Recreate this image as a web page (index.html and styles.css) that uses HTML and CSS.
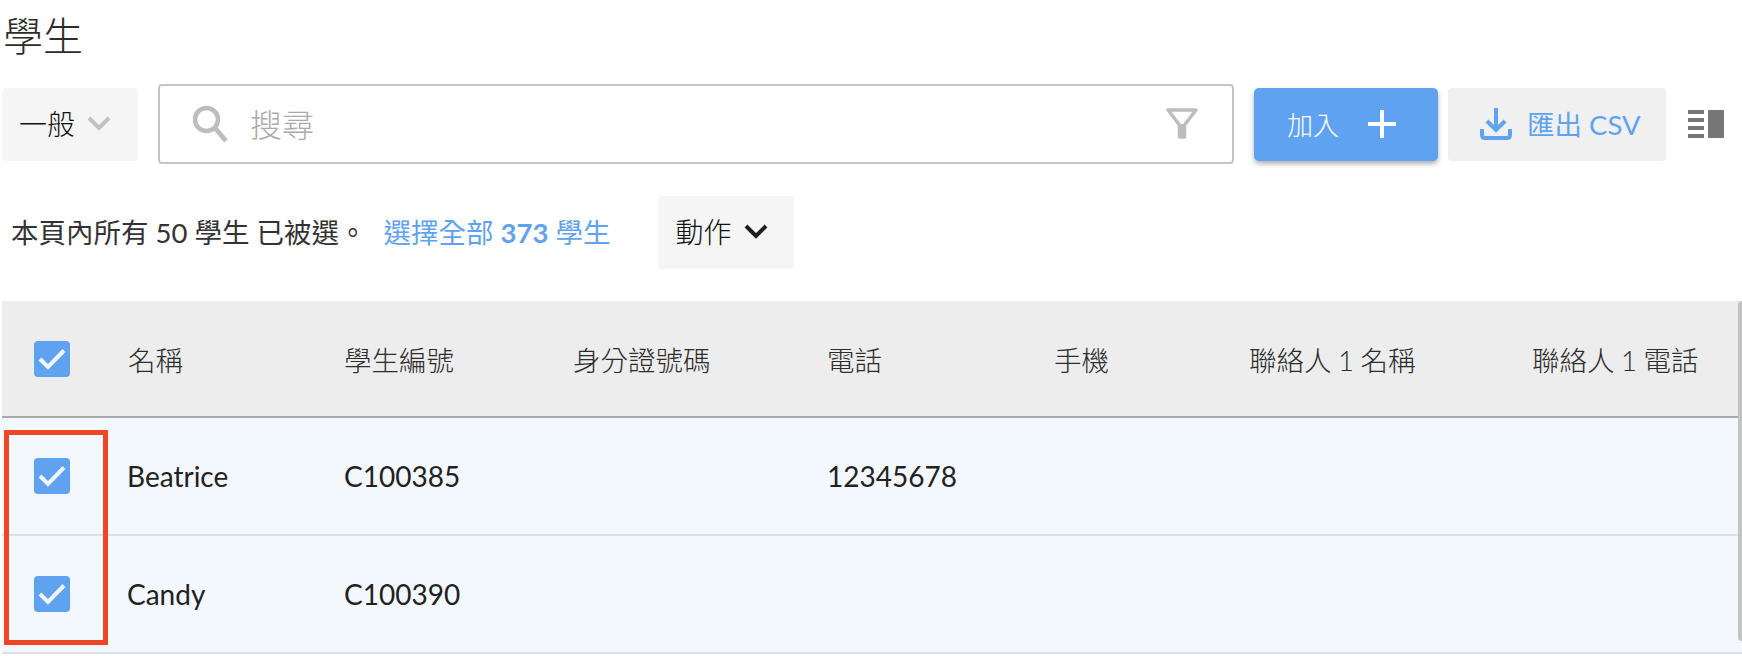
FILE: index.html
```html
<!DOCTYPE html>
<html lang="zh-Hant">
<head>
<meta charset="utf-8">
<title>學生</title>
<link rel="stylesheet" href="styles.css">
</head>
<body>
<main class="page">
  <h1 class="title">學生</h1>
  <div class="toolbar">
    <button class="scope">一般
      <svg class="scope-chev" viewBox="0 0 24 16"><path d="M2 3l10 10L22 3" fill="none" stroke="#c2c2c2" stroke-width="4"/></svg>
    </button>
    <div class="search">
      <svg class="search-icon" viewBox="0 0 36 38"><circle cx="14.5" cy="14.500" r="11.500" fill="none" stroke="#bdbdbd" stroke-width="4.500"/><path d="M23 23l11 13" stroke="#bdbdbd" stroke-width="5" fill="none"/></svg>
      <span class="search-text">搜尋</span>
      <svg class="filter-icon" viewBox="0 0 32 32"><path d="M2 2h28L18.500 17v12h-5V17z" fill="none" stroke="#bdbdbd" stroke-width="3.500" stroke-linejoin="round"/><path d="M13 16h6v14h-6z" fill="#bdbdbd"/></svg>
    </div>
    <button class="add">加入
      <svg class="add-icon" viewBox="0 0 28 28"><path d="M14 0v28M0 14h28" stroke="#fff" stroke-width="4"/></svg>
    </button>
    <button class="export"><svg class="export-icon" viewBox="0 0 32 32"><path d="M16 0v21M7 13l9 9 9-9" fill="none" stroke="#5fa3f0" stroke-width="4"/><path d="M2 21v6q0 3 3 3h22q3 0 3-3v-6" fill="none" stroke="#5fa3f0" stroke-width="4"/></svg><span>匯出 CSV</span></button>
    <svg class="columns-icon" viewBox="0 0 36 28"><path d="M0 0h16v4H0zM0 8h16v4H0zM0 16h16v4H0zM0 24h16v4H0z" fill="#777"/><path d="M20 0h16v28H20z" fill="#777"/></svg>
  </div>
  <div class="selection">
    <span class="selection-note">本頁內所有 50 學生 已被選。</span>
    <a class="selection-all">選擇全部 <strong>373</strong> 學生</a>
    <button class="actions">動作
      <svg class="actions-chev" viewBox="0 0 24 16"><path d="M2 3l10 10L22 3" fill="none" stroke="#1d1d1d" stroke-width="4"/></svg>
    </button>
  </div>
  <div class="table">
    <div class="row head">
      <div class="cell"><span class="check"><svg viewBox="0 0 36 36"><path d="M6 18l8 8L30 9.500" fill="none" stroke="#f0f5fb" stroke-width="4"/></svg></span></div>
      <div class="cell">名稱</div><div class="cell">學生編號</div><div class="cell">身分證號碼</div><div class="cell">電話</div><div class="cell">手機</div><div class="cell">聯絡人 1 名稱</div><div class="cell">聯絡人 1 電話</div>
    </div>
    <div class="row body-row">
      <div class="cell"><span class="check"><svg viewBox="0 0 36 36"><path d="M6 18l8 8L30 9.500" fill="none" stroke="#f0f5fb" stroke-width="4"/></svg></span></div>
      <div class="cell name">Beatrice</div><div class="cell">C100385</div><div class="cell"></div><div class="cell">12345678</div><div class="cell"></div><div class="cell"></div><div class="cell"></div>
    </div>
    <div class="row body-row">
      <div class="cell"><span class="check"><svg viewBox="0 0 36 36"><path d="M6 18l8 8L30 9.500" fill="none" stroke="#f0f5fb" stroke-width="4"/></svg></span></div>
      <div class="cell name">Candy</div><div class="cell">C100390</div><div class="cell"></div><div class="cell"></div><div class="cell"></div><div class="cell"></div><div class="cell"></div>
    </div>
    <div class="scrollbar"></div>
    <div class="highlight"></div>
  </div>
</main>
</body>
</html>
```
FILE: styles.css
```css
* { box-sizing: border-box; }
html, body { margin: 0; height: 656px; overflow: hidden; background: #fff; }
body { font-family: Lato, "Noto Sans CJK TC", sans-serif; color: #262626; }
button { font: inherit; border: 0; cursor: pointer; }
.page { padding-left: 2px; }
.title { margin: 0; height: 84px; padding: 10px 0 0 1px; font-size: 40px; line-height: 52px; font-weight: 300; color: #2c2c2c; }
.toolbar { display: flex; align-items: center; height: 80px; }
.scope { flex: none; width: 136px; height: 73px; background: #f5f5f5; border-radius: 4px; display: flex; align-items: center; padding: 0 0 2px 17px; font-size: 28px; font-weight: 300; color: #111; }
.scope-chev { flex: none; width: 24px; height: 16px; margin-left: 12px; }
.search { flex: none; width: 1076px; height: 80px; margin-left: 20px; border: 2px solid #c4c4c4; border-radius: 4px; display: flex; align-items: center; padding: 0 34px 0 32px; }
.search-icon { flex: none; width: 36px; height: 38px; }
.search-text { margin: 0 0 2px 22px; font-size: 32px; font-weight: 300; color: #aaa; }
.filter-icon { flex: none; width: 32px; height: 32px; margin-left: auto; }
.add { flex: none; width: 184px; height: 73px; margin-left: 20px; background: #5fa3f0; border-radius: 5px; color: #fff; box-shadow: 0 3px 5px rgba(0,0,0,.3); display: flex; align-items: center; padding: 0 0 2px 33px; font-size: 26px; font-weight: 300; }
.add-icon { flex: none; width: 28px; height: 28px; margin: 2px 0 0 29px; }
.export { flex: none; width: 218px; height: 73px; margin-left: 10px; background: #f0f0f0; border-radius: 4px; color: #5fa3f0; display: flex; align-items: center; padding: 0 0 0 32px; font-size: 27.500px; white-space: nowrap; }
.export span { margin-bottom: 2px; }
.export-icon { flex: none; width: 32px; height: 32px; margin-right: 15px; }
.columns-icon { flex: none; width: 36px; height: 28px; margin-left: 22px; }
.selection { display: flex; align-items: center; height: 73px; margin-top: 32px; padding-left: 9px; font-size: 27.500px; }
.selection-note { margin-bottom: 4px; color: #333; }
.selection-all { margin: 0 0 3px 17px; color: #5fa3f0; }
.actions { flex: none; width: 136px; height: 73px; margin-left: 48px; background: #f5f5f5; border-radius: 4px; display: flex; align-items: center; padding: 0 0 3px 17px; font-size: 28px; font-weight: 300; color: #111; }
.actions-chev { flex: none; width: 24px; height: 16px; margin-left: 12px; }
.table { position: relative; margin-top: 32px; }
.row { display: grid; grid-template-columns: 126px 216px 229px 254px 227px 195px 283px 1fr; align-items: center; }
.head { height: 117px; background: #ededed; border-bottom: 2px solid #a9a9a9; font-size: 27.500px; font-weight: 300; color: #2c2c2c; word-spacing: -1px; }
.body-row { height: 118px; background: #f3f8fe; border-bottom: 2px solid #dcdfe3; font-size: 28px; color: #222; }
.cell { white-space: nowrap; }
.name { margin-left: -1px; }
.check { display: block; width: 36px; height: 36px; margin-left: 32px; background: #5fa3f0; border-radius: 4px; }
.check svg { display: block; width: 36px; height: 36px; }
.scrollbar { position: absolute; right: 0; top: 0; width: 4px; height: 340px; background: #c4c4c4; border-radius: 4px 0 0 4px; }
.highlight { position: absolute; left: 2px; top: 129px; width: 104px; height: 215px; border: 5px solid #ee4527; }
```
